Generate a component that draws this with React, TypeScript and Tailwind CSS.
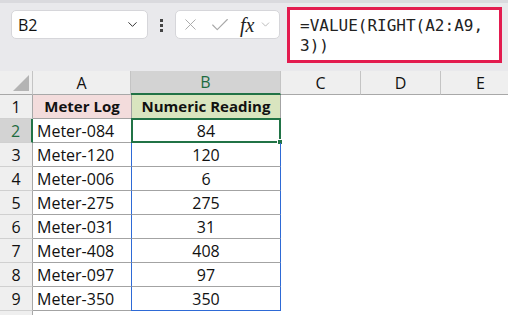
import { ChevronDown, X, Check } from "lucide-react";

const rows = [
  ["Meter-084", "84"],
  ["Meter-120", "120"],
  ["Meter-006", "6"],
  ["Meter-275", "275"],
  ["Meter-031", "31"],
  ["Meter-408", "408"],
  ["Meter-097", "97"],
  ["Meter-350", "350"],
];

export default function App() {
  return (
    <div
      className="w-[508px] h-[315px] overflow-hidden bg-white text-[#111]"
      style={{ fontFamily: '"Open Sans", "Noto Sans", sans-serif' }}
    >
      {/* Formula bar */}
      <div className="h-[71px] bg-[#e9e9ec] border-t-[3px] border-[#dadade] flex items-start pl-[11px] pt-[4px]">
        <div className="mt-[3px] w-[137px] h-[29px] rounded-[5px] bg-white border border-[#d6d6da] flex items-center justify-between pl-[6px] pr-[7px]">
          <span className="text-[16px] leading-none">B2</span>
          <ChevronDown size={15} strokeWidth={1.6} className="text-[#333]" />
        </div>
        <div className="mt-[12px] ml-[12px] flex flex-col gap-[2px]">
          <span className="w-[3px] h-[3px] bg-[#444]" />
          <span className="w-[3px] h-[3px] bg-[#444]" />
          <span className="w-[3px] h-[3px] bg-[#444]" />
        </div>
        <div className="mt-[3px] ml-[12px] w-[105px] h-[29px] rounded-[5px] bg-white border border-[#d6d6da] flex items-center pl-[5px] text-[#a8a8a8]">
          <X size={19} strokeWidth={1.2} />
          <Check size={22} strokeWidth={1.2} className="ml-[9px]" />
          <span
            className="ml-[9px] text-[20px] italic leading-none text-[#222]"
            style={{ fontFamily: '"Liberation Serif", serif' }}
          >
            fx
          </span>
          <ChevronDown size={13} strokeWidth={1.4} className="ml-[5px]" />
        </div>
        <div
          className="ml-[7px] w-[215px] h-[56px] border-[3px] border-[#e31b4f] bg-white pl-[10px] pt-[6px] text-[16px] leading-[20px] text-[#222]"
          style={{ fontFamily: '"DejaVu Sans Mono", monospace' }}
        >
          <div>=VALUE(RIGHT(A2:A9,</div>
          <div>3))</div>
        </div>
      </div>

      {/* Sheet */}
      <div className="grid grid-cols-[33px_98px_150px_80px_80px_80px] text-[16px]">
        {/* column headers */}
        <div className="h-[24px] bg-[#efefef] border-r border-b border-[#c4c4c4] border-b-[#a8a8a8] relative">
          <div className="absolute right-[3px] bottom-[3px] w-0 h-0 border-l-[16px] border-l-transparent border-b-[16px] border-b-[#b4b4b4]" />
        </div>
        <div className="h-[24px] bg-[#efefef] border-r border-b border-r-[#c4c4c4] border-b-[#a8a8a8] flex items-center justify-center">A</div>
        <div className="h-[24px] bg-[#d3d3d3] border-r border-r-[#c4c4c4] border-b-2 border-b-[#217346] flex items-center justify-center text-[#1d6b40]">B</div>
        <div className="h-[24px] bg-[#efefef] border-r border-b border-r-[#c4c4c4] border-b-[#a8a8a8] flex items-center justify-center">C</div>
        <div className="h-[24px] bg-[#efefef] border-r border-b border-r-[#c4c4c4] border-b-[#a8a8a8] flex items-center justify-center">D</div>
        <div className="h-[24px] bg-[#efefef] border-r border-b border-r-[#c4c4c4] border-b-[#a8a8a8] flex items-center justify-center">E</div>

        {/* row 1 */}
        <div className="h-[24px] bg-[#efefef] border-r border-b border-r-[#a8a8a8] border-b-[#d0d0d0] flex items-center justify-center">1</div>
        <div className="h-[24px] bg-[#f3dcdc] border-b border-[#a3a3a3] flex items-center justify-center font-bold text-[15px]">Meter Log</div>
        <div className="h-[24px] bg-[#d9e5bf] border-l border-r border-b border-[#a3a3a3] flex items-center justify-center font-bold text-[15px]">Numeric Reading</div>
        <div className="h-[24px]" />
        <div className="h-[24px]" />
        <div className="h-[24px]" />

        {rows.map(([a, b], i) => {
          const sel = i === 0;
          const last = i === rows.length - 1;
          return [
            <div
              key={`h${i}`}
              className={
                sel
                  ? "h-[24px] bg-[#d3d3d3] border-b border-b-[#d0d0d0] border-r-2 border-r-[#217346] flex items-center justify-center text-[#1d6b40]"
                  : "h-[24px] bg-[#efefef] border-r border-b border-r-[#a8a8a8] border-b-[#d0d0d0] flex items-center justify-center"
              }
            >
              {i + 2}
            </div>,
            <div key={`a${i}`} className="h-[24px] border-b border-[#a3a3a3] flex items-center pl-[4px]">
              {a}
            </div>,
            <div
              key={`b${i}`}
              className={
                last
                  ? "h-[24px] border-l border-r border-b border-[#2e6ad6] flex items-center justify-center relative"
                  : "h-[24px] border-l border-r border-l-[#2e6ad6] border-r-[#2e6ad6] border-b border-b-[#a3a3a3] flex items-center justify-center relative"
              }
            >
              {b}
              {sel && (
                <div className="absolute -left-px -top-px -right-px -bottom-px border-2 border-[#217346]">
                  <div className="absolute -right-[4px] -bottom-[4px] w-[6px] h-[6px] bg-[#217346] border border-white" />
                </div>
              )}
            </div>,
            <div key={`c${i}`} className="h-[24px]" />,
            <div key={`d${i}`} className="h-[24px]" />,
            <div key={`e${i}`} className="h-[24px]" />,
          ];
        })}

        {/* row 10 (partially visible) */}
        <div className="h-[24px] bg-[#efefef] border-r border-r-[#a8a8a8]" />
        <div className="h-[24px]" />
        <div className="h-[24px]" />
        <div className="h-[24px]" />
        <div className="h-[24px]" />
        <div className="h-[24px]" />
      </div>
    </div>
  );
}
